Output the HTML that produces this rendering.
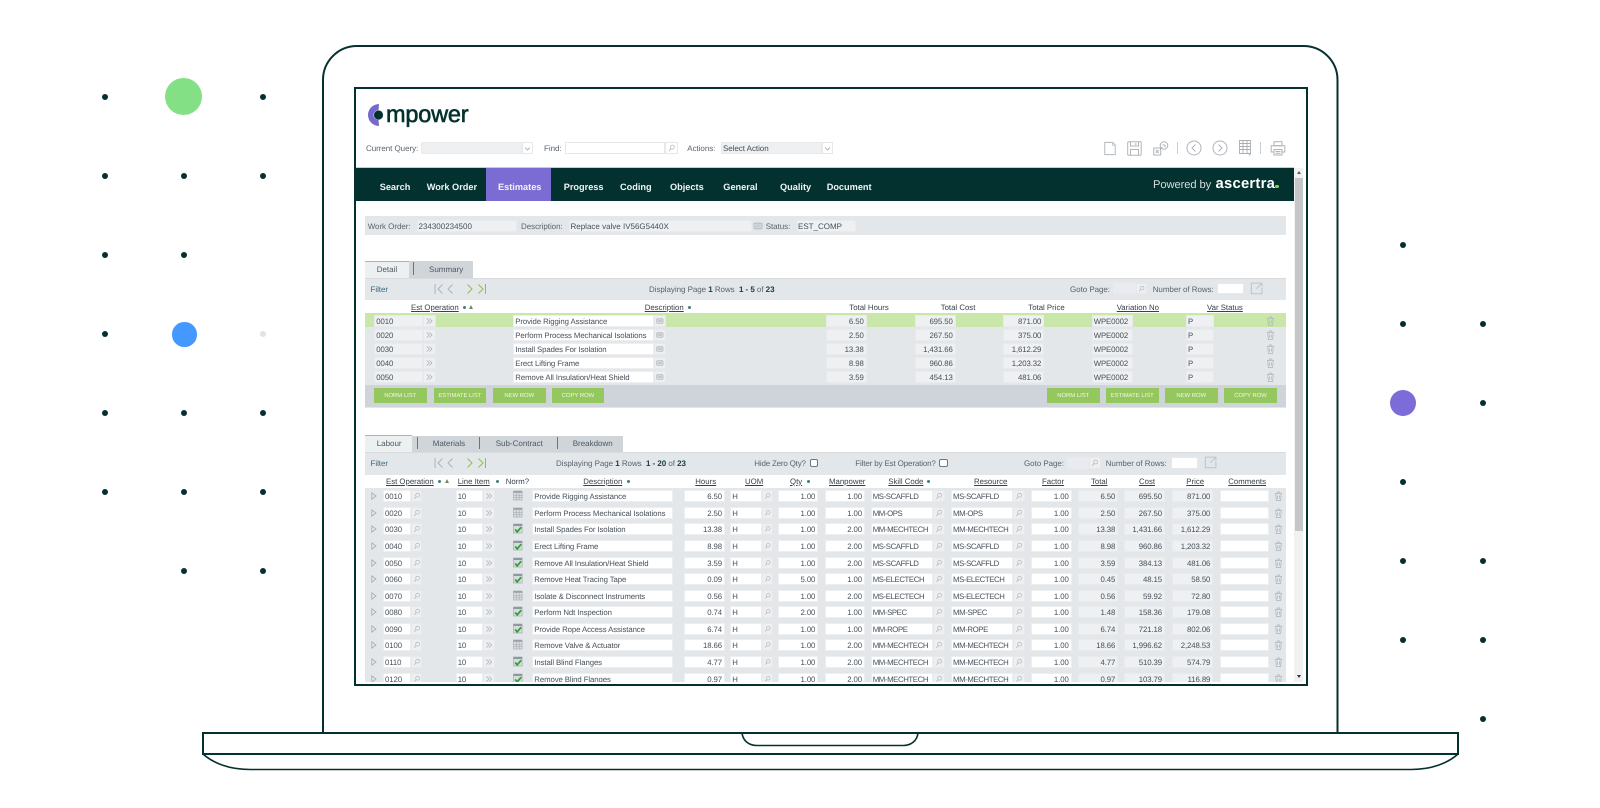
<!DOCTYPE html>
<html><head><meta charset="utf-8"><title>mpower</title>
<style>
html,body{margin:0;padding:0;background:#fff;width:1600px;height:808px;overflow:hidden}
*{box-sizing:border-box}
body{position:relative;font-family:"Liberation Sans",sans-serif;text-rendering:geometricPrecision}
.dot{position:absolute;width:6px;height:6px;border-radius:50%;background:#06302f}
#lap{position:absolute;left:0;top:0}
#app{position:absolute;left:354px;top:87px;width:954px;height:599px;border:2px solid #04312f;background:#fff;overflow:hidden;filter:blur(.3px)}
#v{position:absolute;left:-356px;top:-89px;width:1600px;height:808px}
#v *{position:absolute}
#v span,#v b,#v a,#v em{white-space:nowrap;font-size:8px;line-height:12px;color:#47515b;font-style:normal;font-weight:normal}
#v svg{overflow:visible}
.fl{background:#eef0f2;border:1px solid #e8eaed;height:12px}
.wh{background:#fff;border:1px solid #eceef0;height:12px}
.wf{background:#fff;border:1px solid #e6e8eb;height:12px}
#v .l{font-size:8px;letter-spacing:-.05px;color:#5a646e;margin-top:.5px}
#v .n{font-weight:bold;font-size:9.2px;color:#eef4f4;top:181px}
#v .h{color:#39424c;text-decoration:underline;font-size:7.8px;margin-top:.5px}
#v .h2{color:#39424c;font-size:7.8px;margin-top:.5px}
.sd{width:3px;height:3px;border-radius:50%;background:#3f7f7c}
.tri{width:0;height:0;border-left:2.5px solid transparent;border-right:2.5px solid transparent;border-bottom:4px solid #6e8a6a}
.tb{background:#d0d5da}
#v .tt{font-size:8px;color:#4d5763}
.sep{width:1px;background:#6a737c}
.btn{background:#94c85e;height:15px;width:52.5px;top:388.3px;text-align:center}
#v span.btn{color:#f1f7e6;font-size:5.9px;line-height:17px;text-align:center}
.rw{left:365px;width:921px;height:14px;background:#e4e7ea}
.g1{left:365px;width:921px;height:14px;background:#c9e7a8}
.R{left:0;top:0;width:1600px;height:12px}
#v .R span{font-size:7.8px;letter-spacing:-.1px;color:#47515b;line-height:11px;padding:0 2px 0 1px}
#v .R .ra{text-align:right}
.x{background:#edeff1;border:1px solid #e6e8eb;height:12px;top:0}
.a1{left:374.3px;width:49px}.a2{left:423.3px;width:12.7px}.a3{left:513.3px;width:141px}.a4{left:654.3px;width:11.7px}
.a5{left:825.7px;width:41px}.a6{left:914.7px;width:41px}.a7{left:1003.3px;width:41px}.a8{left:1091.7px;width:41px}.a9{left:1186px;width:28.3px}
.at{left:1265px;width:11px;height:12px;top:0}
.c1{left:383px;width:27.7px}.x1{left:410.7px;width:11.6px}
.c2{left:455.7px;width:27.3px}.x2{left:483px;width:12px}
.ni{left:513px;width:10px;height:11px;top:0}
.c3{left:532.3px;width:141px}.c4{left:684px;width:41px}.c5{left:730.3px;width:32px}.x5{left:762.3px;width:11px}
.c6{left:778.3px;width:40px}.c7{left:824.7px;width:40.3px}.c8{left:870.7px;width:62.6px}.x8{left:933.3px;width:11.7px}
.c9{left:951px;width:62.3px}.x9{left:1013.3px;width:11.7px}.c10{left:1031.3px;width:40.4px}
#v .R .c8,#v .R .c9{letter-spacing:-.4px}
.c11{left:1077.7px;width:40.6px}.c12{left:1123.7px;width:41.3px}.c13{left:1172px;width:41.3px}.c14{left:1219.7px;width:49.6px}
.ct{left:1273px;width:11px;height:12px;top:0}
.tr2{left:371px;top:2px;width:6px;height:8px}
.ck{width:8.4px;height:8.4px;border:1px solid #6d757d;border-radius:2px;background:#fff}
.bn{position:static!important;font-weight:bold!important;color:#16404a!important;font-size:8px}
</style></head><body>

<svg width="0" height="0" style="position:absolute">
<symbol id="m" viewBox="0 0 12 12"><circle cx="7" cy="5" r="2.4" fill="none" stroke="#b1b8bf" stroke-width=".9"/><path d="M5.2 6.8L3 9.4" stroke="#b1b8bf" stroke-width="1" fill="none"/></symbol>
<symbol id="d" viewBox="0 0 12 12"><path d="M2.8 2.8L6 6l-3.2 3.2M6 2.8L9.2 6 6 9.2" stroke="#aab2ba" stroke-width=".9" fill="none"/></symbol>
<symbol id="n" viewBox="0 0 12 12"><rect x="2" y="3.2" width="8" height="5.6" rx="1" fill="#d9dde0" stroke="#adb4bb" stroke-width=".8"/><path d="M3.5 5h5M3.5 6.8h5" stroke="#aab1b8" stroke-width=".6"/></symbol>
<symbol id="t" viewBox="0 0 12 12"><path d="M2.2 3.2h7.6M4.4 3a1.6 1.6 0 0 1 3.2 0M3 3.4l.7 7.4h4.6L9 3.4M5 5.4v3.4M7 5.4v3.4" stroke="#b3bac0" stroke-width=".9" fill="none"/></symbol>
<symbol id="g" viewBox="0 0 10 11"><rect x=".5" y="1" width="8.6" height="9" fill="#d9dde0" stroke="#a7aeb4" stroke-width=".7"/><rect x=".5" y="1" width="8.6" height="1.8" fill="#9aa2a9"/><path d="M3.3 3v7M6.2 3v7M.5 5.3h8.6M.5 7.6h8.6" stroke="#a7aeb4" stroke-width=".6"/></symbol>
<symbol id="c" viewBox="0 0 10 11"><rect x=".5" y="1" width="8.6" height="9" fill="#d6dbdf" stroke="#a2aab1" stroke-width=".7"/><rect x=".5" y="1" width="8.6" height="2" fill="#8f989f"/><path d="M2.2 6.4L4.2 8.8 8.2 4.2" stroke="#2fa32c" stroke-width="1.8" fill="none"/></symbol>
<symbol id="s" viewBox="0 0 12 12"><path d="M1.5 .8h6.8v0l2.2 2.2v8.2h-9z" fill="none" stroke="#b7bec4" stroke-width=".9"/><path d="M8.2 .8v2.4h2.3" fill="none" stroke="#b7bec4" stroke-width=".7"/></symbol>
<symbol id="x" viewBox="0 0 12 12"><path d="M8.6 1H1.2v9.8H11V5M6 6.2L11 1M8 1h3v3" fill="none" stroke="#bcc3c9" stroke-width=".9"/></symbol>
<symbol id="lf" viewBox="0 0 8 12"><path d="M6.5 1.5L2 6l4.5 4.5" stroke="#aab3bb" stroke-width="1" fill="none"/></symbol>
<symbol id="rf" viewBox="0 0 8 12"><path d="M1.5 1.5L6 6l-4.5 4.5" stroke="#8cc152" stroke-width="1" fill="none"/></symbol>
</svg>

<div class="dot" style="left:102px;top:94px"></div><div class="dot" style="left:260px;top:94px"></div>
<div class="dot" style="left:102px;top:173px"></div><div class="dot" style="left:181px;top:173px"></div><div class="dot" style="left:260px;top:173px"></div>
<div class="dot" style="left:102px;top:252px"></div><div class="dot" style="left:181px;top:252px"></div>
<div class="dot" style="left:102px;top:331px"></div><div class="dot" style="left:260px;top:331px;background:#dfe4e4"></div>
<div class="dot" style="left:102px;top:410px"></div><div class="dot" style="left:181px;top:410px"></div><div class="dot" style="left:260px;top:410px"></div>
<div class="dot" style="left:102px;top:489px"></div><div class="dot" style="left:181px;top:489px"></div><div class="dot" style="left:260px;top:489px"></div>
<div class="dot" style="left:181px;top:568px"></div><div class="dot" style="left:260px;top:568px"></div>
<div class="dot" style="left:1400px;top:242px"></div>
<div class="dot" style="left:1400px;top:321px"></div><div class="dot" style="left:1480px;top:321px"></div>
<div class="dot" style="left:1480px;top:400px"></div>
<div class="dot" style="left:1400px;top:479px"></div>
<div class="dot" style="left:1400px;top:558px"></div><div class="dot" style="left:1480px;top:558px"></div>
<div class="dot" style="left:1400px;top:637px"></div><div class="dot" style="left:1480px;top:637px"></div>
<div class="dot" style="left:1480px;top:716px"></div>
<div style="position:absolute;left:165px;top:78px;width:37px;height:37px;border-radius:50%;background:#84e084"></div>
<div style="position:absolute;left:172px;top:322px;width:24.5px;height:24.5px;border-radius:50%;background:#4399ff"></div>
<div style="position:absolute;left:1390px;top:390px;width:26px;height:26px;border-radius:50%;background:#7b6cd9"></div>

<svg id="lap" width="1600" height="808" viewBox="0 0 1600 808" fill="none">
<path d="M323 732V80a34 34 0 0 1 34-34H1303.500a34 34 0 0 1 34 34V732" stroke="#04312f" stroke-width="2"/>
<path d="M203 733H1458V754H203Z" stroke="#04312f" stroke-width="2"/>
<path d="M203 754C213 763 229 769.500 250 769.500H1411C1432 769.500 1448 763 1458 754" stroke="#04312f" stroke-width="1.600"/>
<path d="M742 733C743 741 749 745.500 757 745.500H903C911 745.500 917 741 918 733" stroke="#04312f" stroke-width="1.600"/>
</svg>

<div id="app"><div id="v">

<svg style="left:366px;top:102px" width="24" height="26" viewBox="0 0 24 26"><path d="M13 2A11 11 0 0 0 13 24L12.500 18A5 5 0 0 1 12.500 8Z" fill="#7668cf"/><circle cx="12.500" cy="13" r="4.600" fill="#04312f"/></svg>
<span style="left:386px;top:100.500px;font-size:23.500px;line-height:26px;color:#04312f;-webkit-text-stroke:.6px #04312f;letter-spacing:-.2px">mpower</span>

<span class="l" style="left:366px;top:142px">Current Query:</span>
<div class="fl" style="left:421px;top:142.300px;width:101px"></div>
<div class="wf" style="left:522px;top:142.300px;width:11px"></div>
<svg style="left:524px;top:145px" width="7" height="7" fill="none"><path d="M1 2.500L3.500 5 6 2.500" stroke="#9aa2a9" stroke-width=".8"/></svg>
<span class="l" style="left:544px;top:142px">Find:</span>
<div class="wf" style="left:565px;top:142.300px;width:100px"></div>
<svg class="wf" style="left:665px;top:142.300px;width:13px"><use href="#m"/></svg>
<span class="l" style="left:687.300px;top:142px">Actions:</span>
<div class="fl" style="left:721px;top:142.300px;width:101px"></div>
<span class="l" style="left:723px;top:142.500px;color:#444e58">Select Action</span>
<div class="wf" style="left:822px;top:142.300px;width:11px"></div>
<svg style="left:824px;top:145px" width="7" height="7" fill="none"><path d="M1 2.500L3.500 5 6 2.500" stroke="#9aa2a9" stroke-width=".8"/></svg>

<svg style="left:1103px;top:141px" width="14" height="15"><use href="#s"/></svg>
<svg style="left:1127px;top:141px" width="15" height="15" fill="none" stroke="#aeb5bb" stroke-width="1"><rect x=".7" y=".7" width="13.500" height="13.500" rx="1"/><path d="M3.500 1v4h8V1M3.500 14V8.500h8V14M8.800 2v2"/></svg>
<svg style="left:1153px;top:141px" width="16" height="15" fill="none" stroke="#aeb5bb" stroke-width="1"><rect x=".7" y="7" width="7" height="7"/><circle cx="11" cy="4.500" r="3.800"/><path d="M2.800 9l2.800 3M5.600 9l-2.800 3M7 8.500l2.500-2.500M9.500 4h2.500M12 4v2.500"/></svg>
<div style="left:1177px;top:142px;width:1px;height:12px;background:#c9ced3"></div>
<svg style="left:1186px;top:140px" width="16" height="16" fill="none" stroke="#aeb5bb" stroke-width="1"><circle cx="8" cy="8" r="7"/><path d="M9.500 4.500L6 8l3.500 3.500"/></svg>
<svg style="left:1212px;top:140px" width="16" height="16" fill="none" stroke="#aeb5bb" stroke-width="1"><circle cx="8" cy="8" r="7"/><path d="M6.500 4.500L10 8l-3.500 3.500"/></svg>
<svg style="left:1239px;top:140px" width="13" height="16" fill="none" stroke="#a8afb6" stroke-width=".9"><path d="M.5.500h11v13H.5zM.5 3.500h11M.5 6.500h11M.5 9.500h11M4 .500v13M8 .500v13M9 13l2.500 2.500"/></svg>
<div style="left:1260px;top:142px;width:1px;height:12px;background:#c9ced3"></div>
<svg style="left:1270px;top:141px" width="16" height="15" fill="none" stroke="#aeb5bb" stroke-width="1"><rect x="4" y=".7" width="8" height="4"/><path d="M4 11H1.200V4.700H14.800V11H12"/><rect x="4" y="8.500" width="8" height="5.500"/><path d="M5.500 10.500h5M5.500 12.200h5"/></svg>

<div style="left:356px;top:166.700px;width:938px;height:1px;background:#c8ccd0"></div>
<div style="left:356px;top:168px;width:938px;height:33px;background:#02312f"></div>
<div style="left:486px;top:168px;width:65px;height:33px;background:#7b6cd3"></div>
<span class="n" style="left:379.700px">Search</span>
<span class="n" style="left:426.700px">Work Order</span>
<span class="n" style="left:498px">Estimates</span>
<span class="n" style="left:563.700px">Progress</span>
<span class="n" style="left:620px">Coding</span>
<span class="n" style="left:670px">Objects</span>
<span class="n" style="left:723.300px">General</span>
<span class="n" style="left:780px">Quality</span>
<span class="n" style="left:826.700px">Document</span>
<span style="left:1153px;top:178px;font-size:11.200px;line-height:14px;color:#d5dedd;letter-spacing:-.1px">Powered by</span>
<b style="left:1215.500px;top:176px;font-size:14.800px;line-height:16px;color:#fff;font-weight:bold;letter-spacing:.25px">ascertra</b>
<div style="left:1275px;top:184.500px;width:3.500px;height:3.500px;border-radius:50%;background:#84d95a"></div>

<div style="left:1294px;top:168px;width:9.300px;height:514px;background:#f1f1f1"></div>
<div style="left:1295px;top:178px;width:7.500px;height:353px;background:#c4c6c8"></div>
<div style="left:1297px;top:171px;width:0;height:0;border-left:2.500px solid transparent;border-right:2.500px solid transparent;border-bottom:3px solid #5a5a5a"></div>
<div style="left:1296.500px;top:675px;width:0;height:0;border-left:2.500px solid transparent;border-right:2.500px solid transparent;border-top:3px solid #333"></div>

<div style="left:365px;top:216px;width:921px;height:19px;background:#e4e7ea"></div>
<span class="l" style="left:367.700px;top:220px">Work Order:</span>
<div class="fl" style="left:416.700px;top:220px;width:100px;height:11.500px"></div>
<span style="left:418.500px;top:220.500px">234300234500</span>
<span class="l" style="left:521px;top:220px">Description:</span>
<div class="fl" style="left:569px;top:220px;width:182.700px;height:11.500px"></div>
<span style="left:570.500px;top:220.500px">Replace valve IV56G5440X</span>
<svg style="left:752px;top:220px;width:12px;height:12px"><use href="#n"/></svg>
<span class="l" style="left:765.700px;top:220px">Status:</span>
<div class="fl" style="left:796.700px;top:220px;width:59px;height:11.500px"></div>
<span style="left:798px;top:220.500px">EST_COMP</span>

<div style="left:365px;top:261px;width:107.700px;height:18px;background:#d0d5da"></div>
<div style="left:365px;top:260.500px;width:44px;height:18.500px;background:#edf0f1;border-top:1px solid #9ccc65"></div>
<span class="tt" style="left:376.700px;top:264px">Detail</span>
<div class="sep" style="left:412.500px;top:262px;width:1px;height:13px"></div>
<span class="tt" style="left:429px;top:264px">Summary</span>

<div style="left:365px;top:278px;width:921px;height:21.500px;background:#e4e7ea;border-top:1.500px solid #d8dbde"></div>
<span class="l" style="left:370.500px;top:283px;color:#3b6a80">Filter</span>
<svg style="left:434px;top:283px" width="10" height="12" fill="none"><path d="M1 1v10M8.500 1.500L4 6l4.500 4.500" stroke="#aab3bb"/></svg>
<svg style="left:446px;top:283px" width="8" height="12"><use href="#lf"/></svg>
<svg style="left:466px;top:283px" width="8" height="12"><use href="#rf"/></svg>
<svg style="left:477px;top:283px" width="10" height="12" fill="none"><path d="M1.500 1.500L6 6l-4.500 4.500M8.500 1v10" stroke="#8cc152"/></svg>
<span class="l" style="left:649px;top:283px">Displaying Page <b class="bn">1</b> Rows &nbsp;<b class="bn">1 - 5</b> of <b class="bn">23</b></span>
<span class="l" style="left:1070px;top:283px">Goto Page:</span>
<div class="fl" style="left:1113px;top:282.700px;width:22.700px;height:11.600px;background:#e9ebee"></div>
<svg class="x" style="left:1135.700px;top:282.700px;width:11px;height:11.600px"><use href="#m"/></svg>
<span class="l" style="left:1152.700px;top:283px">Number of Rows:</span>
<div class="wf" style="left:1217px;top:282.700px;width:27px;height:11.600px"></div>
<svg style="left:1250px;top:282px" width="13" height="13"><use href="#x"/></svg>

<span class="h" style="left:411px;top:301px">Est Operation</span><div class="sd" style="left:462.500px;top:305.500px"></div><div class="tri" style="left:469px;top:304.500px"></div>
<span class="h" style="left:644.700px;top:301px">Description</span><div class="sd" style="left:687.500px;top:305.500px"></div>
<span class="h2" style="left:849.300px;top:301px">Total Hours</span>
<span class="h2" style="left:940.700px;top:301px">Total Cost</span>
<span class="h2" style="left:1028.300px;top:301px">Total Price</span>
<span class="h" style="left:1116.700px;top:301px">Variation No</span>
<span class="h" style="left:1207px;top:301px">Var Status</span>

<div class="g1" style="top:313.400px"></div>
<div class="rw" style="top:327.400px"></div><div class="rw" style="top:341.400px"></div><div class="rw" style="top:355.400px"></div><div class="rw" style="top:369.400px;height:16px"></div>

<div class="R" style="top:314.500px"><span class="fl a1">0010</span><svg class="x a2"><use href="#d"/></svg><span class="wh a3">Provide Rigging Assistance</span><svg class="x a4"><use href="#n"/></svg><span class="fl a5 ra">6.50</span><span class="fl a6 ra">695.50</span><span class="fl a7 ra">871.00</span><span class="fl a8">WPE0002</span><span class="fl a9">P</span><svg class="at"><use href="#t"/></svg></div>
<div class="R" style="top:328.500px"><span class="fl a1">0020</span><svg class="x a2"><use href="#d"/></svg><span class="wh a3">Perform Process Mechanical Isolations</span><svg class="x a4"><use href="#n"/></svg><span class="fl a5 ra">2.50</span><span class="fl a6 ra">267.50</span><span class="fl a7 ra">375.00</span><span class="fl a8">WPE0002</span><span class="fl a9">P</span><svg class="at"><use href="#t"/></svg></div>
<div class="R" style="top:342.500px"><span class="fl a1">0030</span><svg class="x a2"><use href="#d"/></svg><span class="wh a3">Install Spades For Isolation</span><svg class="x a4"><use href="#n"/></svg><span class="fl a5 ra">13.38</span><span class="fl a6 ra">1,431.66</span><span class="fl a7 ra">1,612.29</span><span class="fl a8">WPE0002</span><span class="fl a9">P</span><svg class="at"><use href="#t"/></svg></div>
<div class="R" style="top:356.500px"><span class="fl a1">0040</span><svg class="x a2"><use href="#d"/></svg><span class="wh a3">Erect Lifting Frame</span><svg class="x a4"><use href="#n"/></svg><span class="fl a5 ra">8.98</span><span class="fl a6 ra">960.86</span><span class="fl a7 ra">1,203.32</span><span class="fl a8">WPE0002</span><span class="fl a9">P</span><svg class="at"><use href="#t"/></svg></div>
<div class="R" style="top:370.500px"><span class="fl a1">0050</span><svg class="x a2"><use href="#d"/></svg><span class="wh a3">Remove All Insulation/Heat Shield</span><svg class="x a4"><use href="#n"/></svg><span class="fl a5 ra">3.59</span><span class="fl a6 ra">454.13</span><span class="fl a7 ra">481.06</span><span class="fl a8">WPE0002</span><span class="fl a9">P</span><svg class="at"><use href="#t"/></svg></div>

<div style="left:365px;top:385px;width:921px;height:21.700px;background:#ced4d9"></div>
<div style="left:365px;top:406.700px;width:921px;height:1.500px;background:#e4e7ea"></div>
<span class="btn" style="left:374px">NORM LIST</span><span class="btn" style="left:433.700px">ESTIMATE LIST</span><span class="btn" style="left:493px">NEW ROW</span><span class="btn" style="left:551.700px">COPY ROW</span>
<span class="btn" style="left:1047px">NORM LIST</span><span class="btn" style="left:1106px">ESTIMATE LIST</span><span class="btn" style="left:1165px">NEW ROW</span><span class="btn" style="left:1224.300px">COPY ROW</span>

<div style="left:365px;top:435.500px;width:257.700px;height:17px;background:#d0d5da"></div>
<div style="left:365px;top:435px;width:47.300px;height:17.500px;background:#edf0f1;border-top:1px solid #9ccc65"></div>
<span class="tt" style="left:376.700px;top:438px">Labour</span>
<div class="sep" style="left:416.700px;top:437px;height:12px"></div>
<span class="tt" style="left:432.700px;top:437.500px">Materials</span>
<div class="sep" style="left:479.300px;top:437px;height:12px"></div>
<span class="tt" style="left:495.700px;top:437.500px">Sub-Contract</span>
<div class="sep" style="left:556.700px;top:437px;height:12px"></div>
<span class="tt" style="left:572.700px;top:437.500px">Breakdown</span>

<div style="left:365px;top:451.500px;width:921px;height:23px;background:#e4e7ea;border-top:1.500px solid #d8dbde"></div>
<span class="l" style="left:370.500px;top:457.300px;color:#3b6a80">Filter</span>
<svg style="left:434px;top:457px" width="10" height="12" fill="none"><path d="M1 1v10M8.500 1.500L4 6l4.500 4.500" stroke="#aab3bb"/></svg>
<svg style="left:446px;top:457px" width="8" height="12"><use href="#lf"/></svg>
<svg style="left:466px;top:457px" width="8" height="12"><use href="#rf"/></svg>
<svg style="left:477px;top:457px" width="10" height="12" fill="none"><path d="M1.500 1.500L6 6l-4.500 4.500M8.500 1v10" stroke="#8cc152"/></svg>
<span class="l" style="left:556px;top:457.300px">Displaying Page <b class="bn">1</b> Rows &nbsp;<b class="bn">1 - 20</b> of <b class="bn">23</b></span>
<span class="l" style="left:754.300px;top:457.300px;letter-spacing:-.2px">Hide Zero Qty?</span><div class="ck" style="left:810px;top:459px"></div>
<span class="l" style="left:855.300px;top:457.300px;letter-spacing:-.15px">Filter by Est Operation?</span><div class="ck" style="left:939.300px;top:459px"></div>
<span class="l" style="left:1024px;top:457.300px">Goto Page:</span>
<div class="fl" style="left:1066.700px;top:457.300px;width:22.300px;height:11.600px;background:#e9ebee"></div>
<svg class="x" style="left:1089px;top:457.300px;width:11.700px;height:11.600px"><use href="#m"/></svg>
<span class="l" style="left:1105.700px;top:457.300px">Number of Rows:</span>
<div class="wf" style="left:1170.700px;top:457.300px;width:27px;height:11.600px"></div>
<svg style="left:1203.500px;top:456px" width="13" height="13"><use href="#x"/></svg>

<span class="h" style="left:386px;top:475.300px">Est Operation</span><div class="sd" style="left:437.500px;top:480px"></div><div class="tri" style="left:444.500px;top:479px"></div>
<span class="h" style="left:457.700px;top:475.300px">Line Item</span><div class="sd" style="left:495.500px;top:480px"></div>
<span class="h2" style="left:505.700px;top:475.300px">Norm?</span>
<span class="h" style="left:583.300px;top:475.300px">Description</span><div class="sd" style="left:626.500px;top:480px"></div>
<span class="h" style="left:695.300px;top:475.300px">Hours</span>
<span class="h" style="left:745px;top:475.300px">UOM</span>
<span class="h" style="left:790px;top:475.300px">Qty</span><div class="sd" style="left:806.500px;top:480px"></div>
<span class="h" style="left:829px;top:475.300px">Manpower</span>
<span class="h" style="left:888.300px;top:475.300px">Skill Code</span><div class="sd" style="left:926.500px;top:480px"></div>
<span class="h" style="left:974px;top:475.300px">Resource</span>
<span class="h" style="left:1042px;top:475.300px">Factor</span>
<span class="h" style="left:1091px;top:475.300px">Total</span>
<span class="h" style="left:1139px;top:475.300px">Cost</span>
<span class="h" style="left:1186.300px;top:475.300px">Price</span>
<span class="h" style="left:1228.300px;top:475.300px">Comments</span>

<div style="left:365px;top:488.300px;width:921px;height:193.700px;background:#e4e7ea;overflow:hidden" id="rows">
<div style="left:0;top:-488.300px;width:1600px;height:808px;transform:translateX(-365px)">

<div class="R" style="top:490.300px"><svg class="tr2"><path d="M.8 .8L5 4 .8 7.200Z" fill="none" stroke="#a2aab1" stroke-width=".8"/></svg><span class="wh c1">0010</span><svg class="x x1"><use href="#m"/></svg><span class="wh c2">10</span><svg class="x x2"><use href="#d"/></svg><svg class="ni"><use href="#g"/></svg><span class="wh c3">Provide Rigging Assistance</span><span class="wh c4 ra">6.50</span><span class="wh c5">H</span><svg class="x x5"><use href="#m"/></svg><span class="wh c6 ra">1.00</span><span class="wh c7 ra">1.00</span><span class="wh c8">MS-SCAFFLD</span><svg class="x x8"><use href="#m"/></svg><span class="wh c9">MS-SCAFFLD</span><svg class="x x9"><use href="#m"/></svg><span class="wh c10 ra">1.00</span><span class="fl c11 ra">6.50</span><span class="fl c12 ra">695.50</span><span class="fl c13 ra">871.00</span><span class="wh c14"></span><svg class="ct"><use href="#t"/></svg></div>

<div class="R" style="top:506.900px"><svg class="tr2"><path d="M.8 .8L5 4 .8 7.200Z" fill="none" stroke="#a2aab1" stroke-width=".8"/></svg><span class="wh c1">0020</span><svg class="x x1"><use href="#m"/></svg><span class="wh c2">10</span><svg class="x x2"><use href="#d"/></svg><svg class="ni"><use href="#g"/></svg><span class="wh c3">Perform Process Mechanical Isolations</span><span class="wh c4 ra">2.50</span><span class="wh c5">H</span><svg class="x x5"><use href="#m"/></svg><span class="wh c6 ra">1.00</span><span class="wh c7 ra">1.00</span><span class="wh c8">MM-OPS</span><svg class="x x8"><use href="#m"/></svg><span class="wh c9">MM-OPS</span><svg class="x x9"><use href="#m"/></svg><span class="wh c10 ra">1.00</span><span class="fl c11 ra">2.50</span><span class="fl c12 ra">267.50</span><span class="fl c13 ra">375.00</span><span class="wh c14"></span><svg class="ct"><use href="#t"/></svg></div>

<div class="R" style="top:523.400px"><svg class="tr2"><path d="M.8 .8L5 4 .8 7.200Z" fill="none" stroke="#a2aab1" stroke-width=".8"/></svg><span class="wh c1">0030</span><svg class="x x1"><use href="#m"/></svg><span class="wh c2">10</span><svg class="x x2"><use href="#d"/></svg><svg class="ni"><use href="#c"/></svg><span class="wh c3">Install Spades For Isolation</span><span class="wh c4 ra">13.38</span><span class="wh c5">H</span><svg class="x x5"><use href="#m"/></svg><span class="wh c6 ra">1.00</span><span class="wh c7 ra">2.00</span><span class="wh c8">MM-MECHTECH</span><svg class="x x8"><use href="#m"/></svg><span class="wh c9">MM-MECHTECH</span><svg class="x x9"><use href="#m"/></svg><span class="wh c10 ra">1.00</span><span class="fl c11 ra">13.38</span><span class="fl c12 ra">1,431.66</span><span class="fl c13 ra">1,612.29</span><span class="wh c14"></span><svg class="ct"><use href="#t"/></svg></div>

<div class="R" style="top:540px"><svg class="tr2"><path d="M.8 .8L5 4 .8 7.200Z" fill="none" stroke="#a2aab1" stroke-width=".8"/></svg><span class="wh c1">0040</span><svg class="x x1"><use href="#m"/></svg><span class="wh c2">10</span><svg class="x x2"><use href="#d"/></svg><svg class="ni"><use href="#c"/></svg><span class="wh c3">Erect Lifting Frame</span><span class="wh c4 ra">8.98</span><span class="wh c5">H</span><svg class="x x5"><use href="#m"/></svg><span class="wh c6 ra">1.00</span><span class="wh c7 ra">2.00</span><span class="wh c8">MS-SCAFFLD</span><svg class="x x8"><use href="#m"/></svg><span class="wh c9">MS-SCAFFLD</span><svg class="x x9"><use href="#m"/></svg><span class="wh c10 ra">1.00</span><span class="fl c11 ra">8.98</span><span class="fl c12 ra">960.86</span><span class="fl c13 ra">1,203.32</span><span class="wh c14"></span><svg class="ct"><use href="#t"/></svg></div>

<div class="R" style="top:556.500px"><svg class="tr2"><path d="M.8 .8L5 4 .8 7.200Z" fill="none" stroke="#a2aab1" stroke-width=".8"/></svg><span class="wh c1">0050</span><svg class="x x1"><use href="#m"/></svg><span class="wh c2">10</span><svg class="x x2"><use href="#d"/></svg><svg class="ni"><use href="#c"/></svg><span class="wh c3">Remove All Insulation/Heat Shield</span><span class="wh c4 ra">3.59</span><span class="wh c5">H</span><svg class="x x5"><use href="#m"/></svg><span class="wh c6 ra">1.00</span><span class="wh c7 ra">2.00</span><span class="wh c8">MS-SCAFFLD</span><svg class="x x8"><use href="#m"/></svg><span class="wh c9">MS-SCAFFLD</span><svg class="x x9"><use href="#m"/></svg><span class="wh c10 ra">1.00</span><span class="fl c11 ra">3.59</span><span class="fl c12 ra">384.13</span><span class="fl c13 ra">481.06</span><span class="wh c14"></span><svg class="ct"><use href="#t"/></svg></div>

<div class="R" style="top:573.100px"><svg class="tr2"><path d="M.8 .8L5 4 .8 7.200Z" fill="none" stroke="#a2aab1" stroke-width=".8"/></svg><span class="wh c1">0060</span><svg class="x x1"><use href="#m"/></svg><span class="wh c2">10</span><svg class="x x2"><use href="#d"/></svg><svg class="ni"><use href="#c"/></svg><span class="wh c3">Remove Heat Tracing Tape</span><span class="wh c4 ra">0.09</span><span class="wh c5">H</span><svg class="x x5"><use href="#m"/></svg><span class="wh c6 ra">5.00</span><span class="wh c7 ra">1.00</span><span class="wh c8">MS-ELECTECH</span><svg class="x x8"><use href="#m"/></svg><span class="wh c9">MS-ELECTECH</span><svg class="x x9"><use href="#m"/></svg><span class="wh c10 ra">1.00</span><span class="fl c11 ra">0.45</span><span class="fl c12 ra">48.15</span><span class="fl c13 ra">58.50</span><span class="wh c14"></span><svg class="ct"><use href="#t"/></svg></div>

<div class="R" style="top:589.700px"><svg class="tr2"><path d="M.8 .8L5 4 .8 7.200Z" fill="none" stroke="#a2aab1" stroke-width=".8"/></svg><span class="wh c1">0070</span><svg class="x x1"><use href="#m"/></svg><span class="wh c2">10</span><svg class="x x2"><use href="#d"/></svg><svg class="ni"><use href="#g"/></svg><span class="wh c3">Isolate &amp; Disconnect Instruments</span><span class="wh c4 ra">0.56</span><span class="wh c5">H</span><svg class="x x5"><use href="#m"/></svg><span class="wh c6 ra">1.00</span><span class="wh c7 ra">2.00</span><span class="wh c8">MS-ELECTECH</span><svg class="x x8"><use href="#m"/></svg><span class="wh c9">MS-ELECTECH</span><svg class="x x9"><use href="#m"/></svg><span class="wh c10 ra">1.00</span><span class="fl c11 ra">0.56</span><span class="fl c12 ra">59.92</span><span class="fl c13 ra">72.80</span><span class="wh c14"></span><svg class="ct"><use href="#t"/></svg></div>

<div class="R" style="top:606.200px"><svg class="tr2"><path d="M.8 .8L5 4 .8 7.200Z" fill="none" stroke="#a2aab1" stroke-width=".8"/></svg><span class="wh c1">0080</span><svg class="x x1"><use href="#m"/></svg><span class="wh c2">10</span><svg class="x x2"><use href="#d"/></svg><svg class="ni"><use href="#c"/></svg><span class="wh c3">Perform Ndt Inspection</span><span class="wh c4 ra">0.74</span><span class="wh c5">H</span><svg class="x x5"><use href="#m"/></svg><span class="wh c6 ra">2.00</span><span class="wh c7 ra">1.00</span><span class="wh c8">MM-SPEC</span><svg class="x x8"><use href="#m"/></svg><span class="wh c9">MM-SPEC</span><svg class="x x9"><use href="#m"/></svg><span class="wh c10 ra">1.00</span><span class="fl c11 ra">1.48</span><span class="fl c12 ra">158.36</span><span class="fl c13 ra">179.08</span><span class="wh c14"></span><svg class="ct"><use href="#t"/></svg></div>

<div class="R" style="top:622.800px"><svg class="tr2"><path d="M.8 .8L5 4 .8 7.200Z" fill="none" stroke="#a2aab1" stroke-width=".8"/></svg><span class="wh c1">0090</span><svg class="x x1"><use href="#m"/></svg><span class="wh c2">10</span><svg class="x x2"><use href="#d"/></svg><svg class="ni"><use href="#c"/></svg><span class="wh c3">Provide Rope Access Assistance</span><span class="wh c4 ra">6.74</span><span class="wh c5">H</span><svg class="x x5"><use href="#m"/></svg><span class="wh c6 ra">1.00</span><span class="wh c7 ra">1.00</span><span class="wh c8">MM-ROPE</span><svg class="x x8"><use href="#m"/></svg><span class="wh c9">MM-ROPE</span><svg class="x x9"><use href="#m"/></svg><span class="wh c10 ra">1.00</span><span class="fl c11 ra">6.74</span><span class="fl c12 ra">721.18</span><span class="fl c13 ra">802.06</span><span class="wh c14"></span><svg class="ct"><use href="#t"/></svg></div>

<div class="R" style="top:639.300px"><svg class="tr2"><path d="M.8 .8L5 4 .8 7.200Z" fill="none" stroke="#a2aab1" stroke-width=".8"/></svg><span class="wh c1">0100</span><svg class="x x1"><use href="#m"/></svg><span class="wh c2">10</span><svg class="x x2"><use href="#d"/></svg><svg class="ni"><use href="#g"/></svg><span class="wh c3">Remove Valve &amp; Actuator</span><span class="wh c4 ra">18.66</span><span class="wh c5">H</span><svg class="x x5"><use href="#m"/></svg><span class="wh c6 ra">1.00</span><span class="wh c7 ra">2.00</span><span class="wh c8">MM-MECHTECH</span><svg class="x x8"><use href="#m"/></svg><span class="wh c9">MM-MECHTECH</span><svg class="x x9"><use href="#m"/></svg><span class="wh c10 ra">1.00</span><span class="fl c11 ra">18.66</span><span class="fl c12 ra">1,996.62</span><span class="fl c13 ra">2,248.53</span><span class="wh c14"></span><svg class="ct"><use href="#t"/></svg></div>

<div class="R" style="top:655.900px"><svg class="tr2"><path d="M.8 .8L5 4 .8 7.200Z" fill="none" stroke="#a2aab1" stroke-width=".8"/></svg><span class="wh c1">0110</span><svg class="x x1"><use href="#m"/></svg><span class="wh c2">10</span><svg class="x x2"><use href="#d"/></svg><svg class="ni"><use href="#c"/></svg><span class="wh c3">Install Blind Flanges</span><span class="wh c4 ra">4.77</span><span class="wh c5">H</span><svg class="x x5"><use href="#m"/></svg><span class="wh c6 ra">1.00</span><span class="wh c7 ra">2.00</span><span class="wh c8">MM-MECHTECH</span><svg class="x x8"><use href="#m"/></svg><span class="wh c9">MM-MECHTECH</span><svg class="x x9"><use href="#m"/></svg><span class="wh c10 ra">1.00</span><span class="fl c11 ra">4.77</span><span class="fl c12 ra">510.39</span><span class="fl c13 ra">574.79</span><span class="wh c14"></span><svg class="ct"><use href="#t"/></svg></div>

<div class="R" style="top:672.500px"><svg class="tr2"><path d="M.8 .8L5 4 .8 7.200Z" fill="none" stroke="#a2aab1" stroke-width=".8"/></svg><span class="wh c1">0120</span><svg class="x x1"><use href="#m"/></svg><span class="wh c2">10</span><svg class="x x2"><use href="#d"/></svg><svg class="ni"><use href="#c"/></svg><span class="wh c3">Remove Blind Flanges</span><span class="wh c4 ra">0.97</span><span class="wh c5">H</span><svg class="x x5"><use href="#m"/></svg><span class="wh c6 ra">1.00</span><span class="wh c7 ra">2.00</span><span class="wh c8">MM-MECHTECH</span><svg class="x x8"><use href="#m"/></svg><span class="wh c9">MM-MECHTECH</span><svg class="x x9"><use href="#m"/></svg><span class="wh c10 ra">1.00</span><span class="fl c11 ra">0.97</span><span class="fl c12 ra">103.79</span><span class="fl c13 ra">116.89</span><span class="wh c14"></span><svg class="ct"><use href="#t"/></svg></div>

</div></div>

</div></div>
</body></html>
